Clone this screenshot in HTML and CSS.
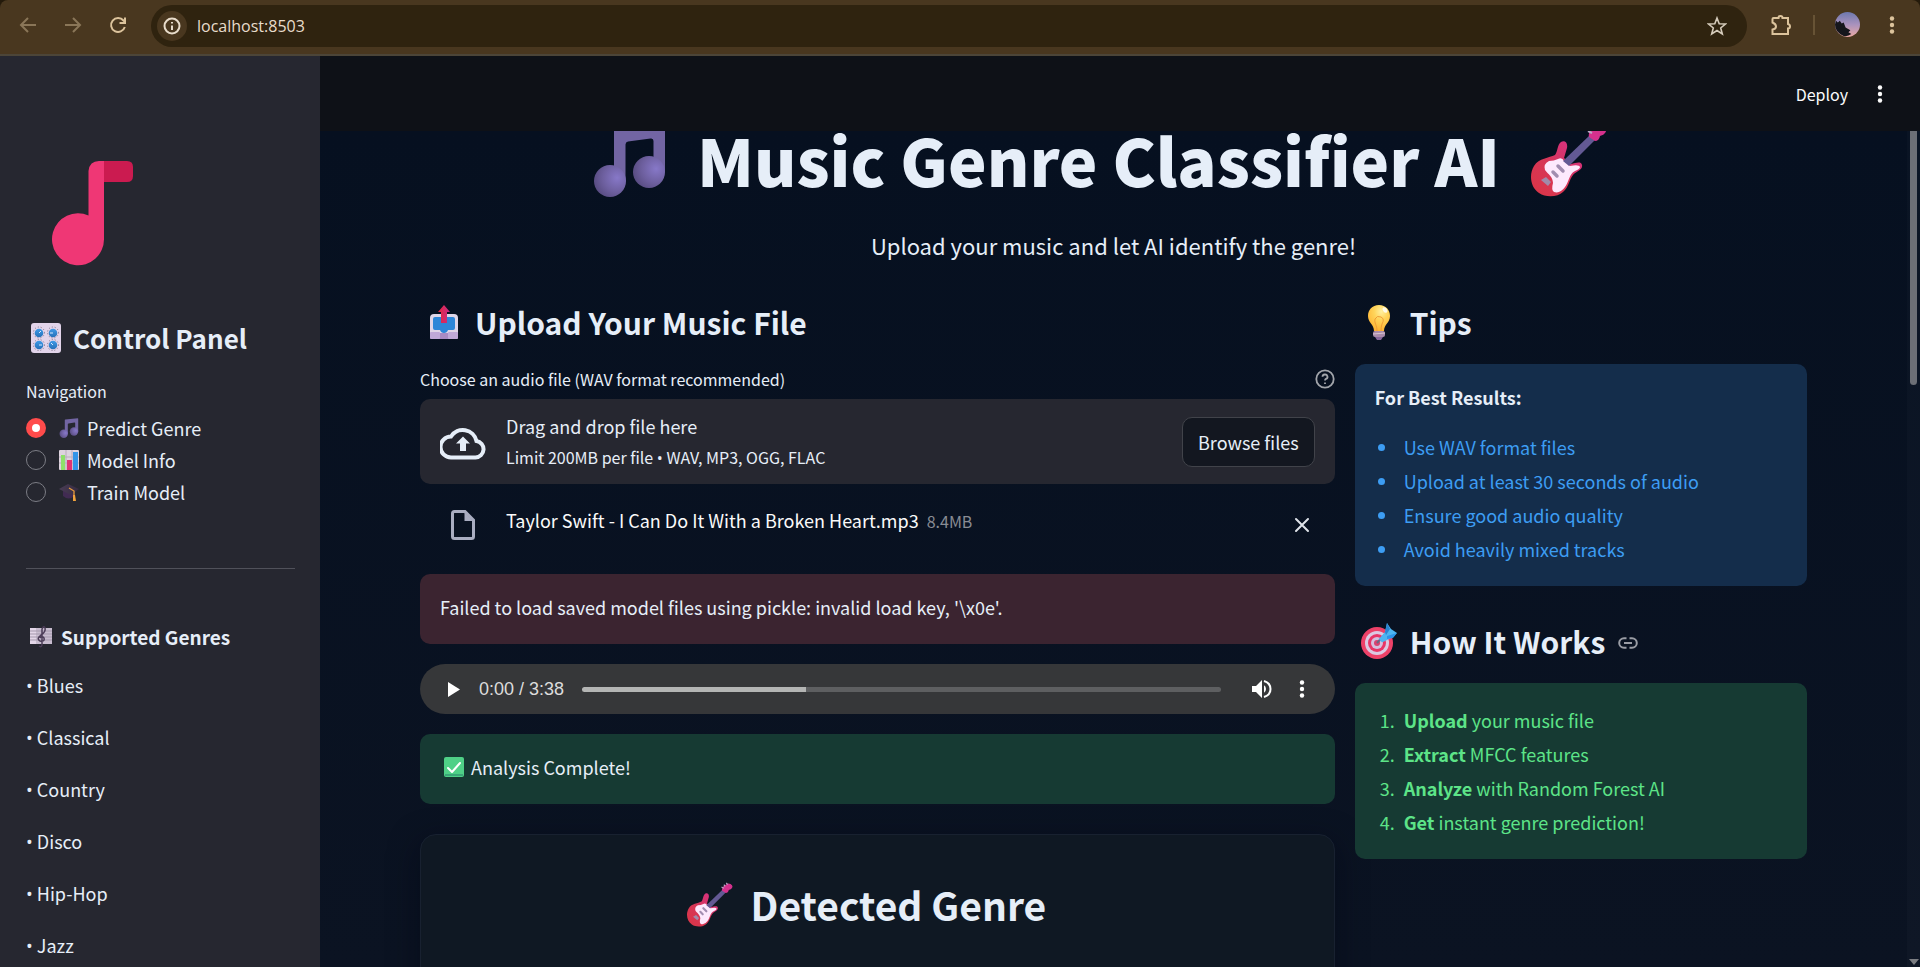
FILE: index.html
```html
<!DOCTYPE html>
<html lang="en">
<head>
<meta charset="utf-8">
<title>Music Genre Classifier AI</title>
<link rel="stylesheet" href="styles.css">
</head>
<body>
<svg class="sprite" aria-hidden="true">
  <defs>
    <radialGradient id="noteHead" cx=".72" cy=".4" r=".75"><stop offset="0" stop-color="#8778c8"/><stop offset=".6" stop-color="#6d5f9e"/><stop offset="1" stop-color="#574b80"/></radialGradient>
    <linearGradient id="guitarBody" x1="0" y1="1" x2="1" y2="0"><stop offset="0" stop-color="#dc3545"/><stop offset=".5" stop-color="#d63659"/><stop offset="1" stop-color="#d9308f"/></linearGradient>
    <linearGradient id="arrowRed" x1="0" x2="1"><stop offset="0" stop-color="#e8283c"/><stop offset="1" stop-color="#c42a88"/></linearGradient>
    <radialGradient id="bulbGlow" cx=".6" cy=".25" r=".8"><stop offset="0" stop-color="#fff0a0"/><stop offset=".4" stop-color="#ffd45a"/><stop offset="1" stop-color="#ffb02e"/></radialGradient>
    <linearGradient id="knob" x1="0" y1="0" x2="0" y2="1"><stop offset="0" stop-color="#3f9be8"/><stop offset="1" stop-color="#2670b8"/></linearGradient>
    <linearGradient id="capTop" x1="0" x2="1"><stop offset="0" stop-color="#4a3d55"/><stop offset="1" stop-color="#352a40"/></linearGradient>
    <linearGradient id="sky" x1="0" y1="0" x2="0" y2="1"><stop offset="0" stop-color="#6d78ae"/><stop offset=".5" stop-color="#a992bd"/><stop offset="1" stop-color="#eba9a4"/></linearGradient>
  </defs>
  <symbol id="e-note" viewBox="0 0 72 76">
    <path d="M20 8Q20 6 22 6L69 1Q71 1 71 3V51H59.500V20Q59.500 17 56.500 17.500L34 20.500Q31.500 21 31.500 23.500V60H20Z" fill="#7265a3"/>
    <ellipse cx="16" cy="60" rx="16" ry="16" fill="url(#noteHead)"/><ellipse cx="55" cy="51" rx="16" ry="16" fill="url(#noteHead)"/>
  </symbol>
  <symbol id="e-guitar" viewBox="0 0 76 76">
    <path d="M24 34C27 30 26 24 30 21C34 19 37 22 36 27L33 37L40 43C45 42 50 40 51 44C52 49 45 50 42 54C38 59 38 66 32 71C27 76 15 77 8 72C-1 66-2 53 3 45C8 37 18 37 24 34Z" fill="url(#guitarBody)"/>
    <path d="M27 38Q31 36 33 40L39 45Q48 43 49 46Q49 48 44 50C38 53 38 61 34 66Q29 73 23 71Q20 69 22 62C22 56 17 53 14 49Q12 43 18 40Q23 40 27 38Z" fill="#fde9fd"/>
    <path d="M32 40L59 14L64 19L38 45Z" fill="#635994"/>
    <path d="M58 16Q57 12 60 9L66 5Q68 3 72 5Q77 8 74 12Q73 14 69 15Q68 20 64 20Z" fill="#d5318d"/>
    <path d="M57 10L61 12M61 6L63 9M65 3L67 6" stroke="#b9a8c6" stroke-width="2"/>
    <path d="M27 45L32 50M22 51L26 55" stroke="#a28db0" stroke-width="3.500" stroke-linecap="round"/>
    <path d="M15 56L20 61L17 65L10 59Z" fill="#a18aaa"/>
  </symbol>
  <symbol id="e-upload" viewBox="0 0 36 36">
    <rect x="4" y="26" width="28" height="9" rx="2" fill="#a98bc4"/><path d="M8 10H28Q32 10 32 14V29H4V14Q4 10 8 10Z" fill="#e0d6e8"/>
    <rect x="4" y="28" width="10" height="7" rx="1" fill="#c0a9d8"/><rect x="22" y="28" width="10" height="7" rx="1" fill="#c0a9d8"/>
    <path d="M9 13H27Q29 13 29 15V24Q29 26 27 26H22Q21 29 18 29T14 26H9Q7 26 7 24V15Q7 13 9 13Z" fill="#2d86d8"/>
    <path d="M18 1L24 8H21V19H15V8H12Z" fill="url(#arrowRed)"/>
  </symbol>
  <symbol id="e-bulb" viewBox="0 0 36 36">
    <path d="M18 1C11 1 7 6 7 12C7 19 13 20 13 27H23C23 20 29 19 29 12C29 6 25 1 18 1Z" fill="url(#bulbGlow)"/>
    <path d="M16 27C16 21 13 19 14 15Q16 11 20 13Q24 15 21 20Q20 23 20 27" fill="none" stroke="#ef9d35" stroke-width="1"/>
    <ellipse cx="24" cy="6" rx="2" ry="3" fill="#fffbe8" transform="rotate(-35 24 6)"/>
    <rect x="12" y="27" width="12" height="6" rx="2" fill="#a98cab"/><path d="M14 33H22L20 36H16Z" fill="#86679b"/><path d="M12 30L24 29" stroke="#d8c4d2"/>
  </symbol>
  <symbol id="e-target" viewBox="0 0 36 36">
    <circle cx="16" cy="20" r="16" fill="#ed4168"/><circle cx="16" cy="20" r="12" fill="#dcc9e2"/><circle cx="16" cy="20" r="9" fill="#e83667"/><circle cx="16" cy="20" r="6" fill="#d4c0df"/><circle cx="16" cy="20" r="3" fill="#d94272"/>
    <path d="M16 20L26 9" stroke="#6a6784" stroke-width="2"/><path d="M18 16L24 9L26 0L30 6L36 10L32 14L24 18Q20 21 18 16Z" fill="#4db5f1"/><path d="M24 9L26 0L29 6L25 12Z" fill="#2b84d0"/><path d="M26 13L36 10L32 15L26 16Z" fill="#2c94e8"/>
  </symbol>
  <symbol id="e-knobs" viewBox="0 0 30 30">
    <rect width="30" height="30" rx="3" fill="#e2d4ea"/>
    <g fill="none" stroke="#7d7187" stroke-width="1" stroke-dasharray="1 2"><circle cx="8" cy="9.500" r="5.500"/><circle cx="22" cy="9.500" r="5.500"/><circle cx="8" cy="22" r="5.500"/><circle cx="22" cy="22" r="5.500"/></g>
    <g fill="url(#knob)"><circle cx="8" cy="10" r="4.300"/><circle cx="22" cy="10" r="4.300"/><circle cx="8" cy="22" r="4.300"/><circle cx="22" cy="22" r="4.300"/></g>
    <path d="M8 10L10 8M22 10H19M8 22H11M22 22L20 20" stroke="#d8eaff" stroke-width="1"/>
  </symbol>
  <symbol id="e-chart" viewBox="0 0 20 20">
    <rect width="20" height="20" rx="1" fill="#ded3df"/><path d="M0 7H20M0 13H20M7 0V20M13 0V20" stroke="#b9acbc" stroke-width="1"/>
    <rect x="2" y="5" width="4" height="15" fill="#8fe06a"/><rect x="8" y="10" width="5" height="10" fill="#e03473"/><rect x="14" y="2" width="5" height="18" fill="#3394e8"/>
  </symbol>
  <symbol id="e-cap" viewBox="0 0 20 20">
    <path d="M4 8L15 10V14Q10 19 4 14Z" fill="#412b52"/><path d="M0 7L9 2L20 7L12 13Z" fill="url(#capTop)"/><path d="M10 6L15 9V16" fill="none" stroke="#e69a3d" stroke-width="1.300"/><path d="M14 13H16L17 19H14Z" fill="#f0a23c"/>
  </symbol>
  <symbol id="e-score" viewBox="0 0 22 22">
    <rect y="2" width="22" height="16" fill="#c8bccf"/><rect y="2" width="6" height="16" fill="#e3d6e8"/><path d="M0 5H22M0 8H22M0 11H22M0 14H22" stroke="#a599ad" stroke-width="1"/>
    <path d="M9 20Q12 22 12 18L12 3Q14 -1 15 2Q16 6 11 9Q6 13 10 15Q15 16 14 12Q12 9 10 12" fill="none" stroke="#4b3c57" stroke-width="1.500"/>
  </symbol>
  <symbol id="e-check" viewBox="0 0 20 20">
    <rect width="20" height="20" rx="2" fill="#4fd087"/><path d="M1 18H19" stroke="#3aa778" stroke-width="2"/><path d="M4 11L8 15L16 6" fill="none" stroke="#fff" stroke-width="2" stroke-linecap="round" stroke-linejoin="round"/>
  </symbol>
  <symbol id="i-dots" viewBox="0 0 24 24"><circle cx="12" cy="5.500" r="2.200"/><circle cx="12" cy="12" r="2.200"/><circle cx="12" cy="18.500" r="2.200"/></symbol>
</svg>

<nav class="browser" aria-label="Browser toolbar">
  <button class="tool dim" aria-label="Back"><svg viewBox="0 0 20 20"><path d="M18 10H3.500M10 3L3 10L10 17" /></svg></button>
  <button class="tool dim" aria-label="Forward"><svg viewBox="0 0 20 20"><path d="M2 10H16.500M10 3L17 10L10 17"/></svg></button>
  <button class="tool" aria-label="Reload"><svg viewBox="0 0 20 20"><path d="M16.800 12A7 7 0 1 1 15.500 5.500L17 7"/><path d="M17 2.500V8H11.500"/></svg></button>
  <div class="address">
    <button class="info" aria-label="Site information"><svg viewBox="0 0 18 18"><circle cx="9" cy="9" r="7.500"/><path d="M9 8.500V13M9 5V6.500"/></svg></button>
    <input class="url" aria-label="Address" value="localhost:8503">
    <button class="tool star" aria-label="Bookmark"><svg viewBox="0 0 20 20"><path d="M10 2L12.200 7.700L18.500 8L13.700 12L15.300 18L10 14.500L4.700 18L6.300 12L1.500 8L7.800 7.700Z"/></svg></button>
  </div>
  <button class="tool puzzle" aria-label="Extensions"><svg viewBox="0 0 22 22"><path d="M3.500 4H8.500Q8.500 2 10.500 2T12.500 4H18V10Q20 10.500 20 12.500T18 14.500V20H2.500V15.500Q6 15 6 12.500T2.500 8.500V5Q2.500 4 3.500 4Z"/></svg></button>
  <span class="divider"></span>
  <button class="avatar" aria-label="Profile"><svg viewBox="0 0 26 26"><circle cx="13" cy="13" r="13" fill="url(#sky)"/><path d="M1 9L3 11L5 9L7 12L9 11L11 16L16 19L14 21L17 23Q13 26 9 25Q0 21 0 13Z" fill="#15161c"/></svg></button>
  <button class="tool menu" aria-label="Browser menu"><svg viewBox="0 0 24 24"><use href="#i-dots"/></svg></button>
</nav>

<div class="app">
  <aside class="sidebar">
    <svg class="brand" viewBox="0 0 107 105" role="img" aria-label="Music note">
      <path d="M78 0H101Q107 0 107 6V15Q107 21 101 21H78Z" fill="#cb1b50"/>
      <path d="M62.500 54.500V10Q63.500 0 73 0H78V78A26 26 0 1 1 62.500 54.500Z" fill="#ef3775"/>
    </svg>
    <h2 class="side-title"><svg><use href="#e-knobs"/></svg>Control Panel</h2>
    <fieldset class="nav">
      <legend>Navigation</legend>
      <label><input type="radio" name="page" checked><svg><use href="#e-note"/></svg>Predict Genre</label>
      <label><input type="radio" name="page"><svg><use href="#e-chart"/></svg>Model Info</label>
      <label><input type="radio" name="page"><svg><use href="#e-cap"/></svg>Train Model</label>
    </fieldset>
    <hr>
    <h3 class="side-sub"><svg><use href="#e-score"/></svg>Supported Genres</h3>
    <div class="genres">
      <p><span class="dot">•</span> Blues</p>
      <p><span class="dot">•</span> Classical</p>
      <p><span class="dot">•</span> Country</p>
      <p><span class="dot">•</span> Disco</p>
      <p><span class="dot">•</span> Hip-Hop</p>
      <p><span class="dot">•</span> Jazz</p>
    </div>
  </aside>

  <div class="page">
    <header class="toolbar">
      <button class="deploy">Deploy</button>
      <button class="more" aria-label="Main menu"><svg><use href="#i-dots"/></svg></button>
    </header>
    <div class="scroller">
      <main class="content">
        <h1><svg><use href="#e-note"/></svg>Music Genre Classifier AI<svg><use href="#e-guitar"/></svg></h1>
        <p class="lead">Upload your music and let AI identify the genre!</p>
        <div class="columns">
          <section class="primary">
            <h2 class="heading"><svg><use href="#e-upload"/></svg>Upload Your Music File</h2>
            <div class="field-label">
              <span>Choose an audio file (WAV format recommended)</span>
              <button class="help" aria-label="Help"><svg viewBox="0 0 20 20"><circle cx="10" cy="10" r="8.700"/><path d="M7.500 7.800A2.500 2.300 0 1 1 11 9.900Q10 10.400 10 11.600M10 13.500V15"/></svg></button>
            </div>
            <div class="dropzone">
              <svg class="cloud" viewBox="0 0 46 36"><path d="M11 33.500H35.500A8.300 8.300 0 0 0 36.500 17A14 14 0 0 0 11 12.500A10.500 10.500 0 0 0 11 33.500Z" fill="none" stroke="currentColor" stroke-width="4"/><path d="M23 12.500L30 19.500H26V27H20V19.500H16Z" fill="currentColor"/></svg>
              <div class="drop-text"><span>Drag and drop file here</span><small>Limit 200MB per file <span class="dot">•</span> WAV, MP3, OGG, FLAC</small></div>
              <button class="browse">Browse files</button>
            </div>
            <div class="file">
              <svg class="doc" viewBox="0 0 24 30"><path d="M3.500 1.500H14L22.500 10V26.500Q22.500 28.500 20.500 28.500H3.500Q1.500 28.500 1.500 26.500V3.500Q1.500 1.500 3.500 1.500Z" fill="none" stroke="currentColor" stroke-width="3"/><path d="M13.500 2V11H22Z" fill="currentColor"/></svg>
              <div class="file-name"><span>Taylor Swift - I Can Do It With a Broken Heart.mp3</span><small>8.4MB</small></div>
              <button class="remove" aria-label="Remove file"><svg viewBox="0 0 16 16"><path d="M2 2L14 14M14 2L2 14"/></svg></button>
            </div>
            <div class="alert error" role="alert">Failed to load saved model files using pickle: invalid load key, '\x0e'.</div>
            <div class="player">
              <button class="play" aria-label="Play"><svg viewBox="0 0 12 15"><path d="M0 0L12 7.500L0 15Z"/></svg></button>
              <span class="time">0:00 / 3:38</span>
              <input class="track" type="range" aria-label="Seek" min="0" max="218" value="0">
              <button class="volume" aria-label="Mute"><svg viewBox="0 0 20 20"><path d="M0 7V13H4L10 19V1L4 7Z"/><path d="M12 6.200Q14 7.500 14 10T12 13.800Z"/><path d="M12 2Q18.500 4 18.500 10T12 18" fill="none" stroke="currentColor" stroke-width="2"/></svg></button>
              <button class="options" aria-label="More media controls"><svg><use href="#i-dots"/></svg></button>
            </div>
            <div class="alert success" role="status"><svg><use href="#e-check"/></svg>Analysis Complete!</div>
            <div class="result"><h2><svg><use href="#e-guitar"/></svg>Detected Genre</h2></div>
          </section>
          <section class="secondary">
            <h2 class="heading"><svg><use href="#e-bulb"/></svg>Tips</h2>
            <div class="alert tips"><strong>For Best Results:</strong>
              <ul><li>Use WAV format files</li><li>Upload at least 30 seconds of audio</li><li>Ensure good audio quality</li><li>Avoid heavily mixed tracks</li></ul>
            </div>
            <h2 class="heading"><svg><use href="#e-target"/></svg>How It Works<a href="#how-it-works" class="anchor" aria-label="Link to heading"><svg viewBox="0 0 20 12"><path d="M8.500 1.200H6A4.800 4.800 0 0 0 6 10.800H8.500M11.500 1.200H14A4.800 4.800 0 0 1 14 10.800H11.500M6 6H14"/></svg></a></h2>
            <div class="alert steps">
              <ol><li><b>Upload</b> your music file</li><li><b>Extract</b> MFCC features</li><li><b>Analyze</b> with Random Forest AI</li><li><b>Get</b> instant genre prediction!</li></ol>
            </div>
          </section>
        </div>
      </main>
      <div class="scrollbar" aria-hidden="true"><span class="thumb"></span><span class="arrow"></span></div>
    </div>
  </div>
</div>
</body>
</html>
```

FILE: styles.css
```css
* { box-sizing: border-box; }

body {
  margin: 0;
  height: 100vh;
  overflow: hidden;
  display: flex;
  flex-direction: column;
  background: #241a0b;
  color: #e6eef8;
  font: 18px/30px "Noto Sans CJK SC", "Noto Sans", sans-serif;
}

h1, h2, h3, p, ul, ol { margin: 0; padding: 0; }
button {
  padding: 0;
  border: 0;
  background: none;
  color: inherit;
  font: inherit;
}
svg { display: block; flex: none; fill: currentColor; }
.sprite { position: absolute; width: 0; height: 0; }
.dot { font-family: "Open Sans", "Noto Sans", sans-serif; line-height: 1; }

/* Browser toolbar */
.browser {
  flex: none;
  display: flex;
  align-items: center;
  height: 56px;
  padding: 0 16px 5px;
  border-bottom: 2px solid #4c4538;
  border-radius: 8px 8px 0 0;
  background: #49371f;
  color: #dcc39c;
}
.tool {
  display: grid;
  place-items: center;
  width: 24px;
  height: 24px;
  margin-right: 21px;
}
.tool svg { width: 20px; height: 20px; fill: none; stroke: currentColor; stroke-width: 2; }
.dim { color: #8a7658; }
.address {
  flex: 1;
  display: flex;
  align-items: center;
  height: 42px;
  margin-top: 2px;
  padding: 0 6px;
  border-radius: 21px;
  background: #2f230f;
}
.info {
  display: grid;
  place-items: center;
  width: 30px;
  height: 30px;
  border-radius: 50%;
  background: #49371f;
  color: #e8dccb;
}
.info svg { width: 18px; height: 18px; fill: none; stroke: currentColor; stroke-width: 2; }
.url {
  flex: 1;
  padding: 0;
  margin-left: 10px;
  border: 0;
  outline: 0;
  background: none;
  color: #e8dccb;
  font: 16px/24px "Open Sans", "Noto Sans", sans-serif;
}
.star { margin-right: 12px; color: #d5cbbb; }
.star svg { stroke-width: 1.6; }
.puzzle { margin: 0 20px 0 22px; }
.puzzle svg { width: 22px; height: 22px; }
.divider { width: 2px; height: 20px; background: #675335; }
.avatar { margin: 0 20px 0 20px; }
.avatar svg { width: 25px; height: 25px; }
.menu { width: 24px; margin: 0; }
.menu svg { width: 24px; height: 24px; fill: currentColor; stroke: none; }

/* App frame */
.app { flex: 1; min-height: 0; display: flex; background: #071021; }
.sidebar {
  flex: none;
  width: 320px;
  padding: 105px 25px 0 26px;
  overflow: hidden;
  background: #262730;
}
.brand { width: 107px; height: 105px; }
.side-title {
  display: flex;
  align-items: center;
  gap: 12px;
  margin: 54px 0 23px;
  padding-left: 5px;
  font-size: 26px;
  line-height: 36px;
  font-weight: 600;
}
.side-title svg { width: 30px; height: 30px; }
.nav { margin: 0; padding: 0; border: 0; min-width: 0; }
.nav legend { padding: 0; margin-bottom: 9px; font-size: 16px; line-height: 24px; }
.nav label { display: flex; align-items: center; height: 32px; gap: 8px; }
.nav label svg { width: 20px; height: 20px; }
.nav input {
  appearance: none;
  width: 20px;
  height: 20px;
  margin: 0 5px 0 0;
  border: 1px solid #7c7d85;
  border-radius: 50%;
}
.nav input:checked { border: 6px solid #ff4b4b; background: #fff; }
.sidebar hr { margin: 60px 0 54px; border: 0; border-top: 1px solid #50515a; }
.side-sub {
  display: flex;
  align-items: center;
  gap: 9px;
  padding-left: 4px;
  font-size: 19px;
  line-height: 28px;
  font-weight: 600;
}
.side-sub svg { width: 22px; height: 22px; }
.genres { display: grid; gap: 22px; margin-top: 19px; }

.page { flex: 1; min-width: 0; display: flex; flex-direction: column; }
.toolbar {
  flex: none;
  display: flex;
  justify-content: flex-end;
  align-items: center;
  gap: 20px;
  height: 75px;
  padding-right: 28px;
  background: #0e1117;
  color: #fafafa;
}
.deploy { font-size: 16px; }
.more svg { width: 24px; height: 24px; }
.scroller {
  flex: 1;
  min-height: 0;
  display: flex;
  overflow: hidden;
  background: linear-gradient(#061020, #0b1322);
}
.content { flex: 1; min-width: 0; margin-top: -12px; padding: 0 100px; }
.scrollbar {
  flex: none;
  display: flex;
  flex-direction: column;
  justify-content: space-between;
  align-items: center;
  width: 13px;
  padding-bottom: 2px;
  background: rgba(255, 255, 255, .02);
}
.thumb { width: 7px; height: 254px; border-radius: 0 0 4px 4px; background: #6c6f76; }
.arrow { border: 5px solid transparent; border-bottom: 0; border-top: 6px solid #7b7d82; }

/* Page headings */
h1 {
  display: flex;
  justify-content: center;
  align-items: center;
  gap: 31px;
  padding-right: 26px;
  font-size: 65px;
  line-height: 80px;
  font-weight: 900;
  white-space: nowrap;
}
h1 svg { width: 76px; height: 76px; }
h1 svg:first-child { width: 72px; }
.lead { margin: 28px 0 39px; font-size: 22px; line-height: 36px; text-align: center; }
.columns { display: flex; gap: 20px; }
.primary { flex: 1 1 calc(66.6667% - 16px); min-width: 0; }
.secondary { flex: 1 1 calc(33.3333% - 16px); min-width: 0; }
.heading {
  display: flex;
  align-items: center;
  gap: 13px;
  padding-left: 6px;
  font-size: 30px;
  line-height: 40px;
  font-weight: 600;
}
.heading > svg { width: 36px; height: 36px; }
.anchor { display: flex; align-items: flex-end; height: 16px; color: #9a9da5; }
.anchor svg { width: 20px; height: 12px; fill: none; stroke: currentColor; stroke-width: 2; }

/* Upload */
.field-label {
  display: flex;
  justify-content: space-between;
  align-items: center;
  margin: 25px 0 8px;
  font-size: 16px;
  line-height: 24px;
}
.help { color: #a2a5ab; }
.help svg { width: 20px; height: 20px; fill: none; stroke: currentColor; stroke-width: 1.8; }
.dropzone {
  display: flex;
  align-items: center;
  min-height: 85px;
  padding: 0 20px;
  border-radius: 10px;
  background: #262730;
}
.cloud { width: 46px; height: 36px; margin-right: 20px; }
.drop-text { flex: 1; display: grid; gap: 5px; line-height: 26px; }
small { font-size: 16px; }
.browse {
  height: 50px;
  padding: 0 15px;
  border: 1px solid #41434a;
  border-radius: 10px;
  background: #131720;
}
.file { display: flex; align-items: center; height: 57px; margin: 12px 0 21px; padding: 0 25px 0 31px; }
.doc { width: 24px; height: 30px; margin-right: 31px; color: #a9adc1; }
.file-name { flex: 1; padding-bottom: 8px; color: #fafafa; }
.file-name small { margin-left: 8px; color: #898c93; }
.remove svg { width: 16px; height: 16px; stroke: #dfe3ea; stroke-width: 2; stroke-linecap: round; }

/* Coloured message boxes */
.alert { padding: 18px 20px 22px; border-radius: 10px; }
.error { background: #3b2430; }
.success { display: flex; align-items: center; gap: 7px; padding-left: 24px; background: #163a33; }
.success svg { width: 20px; height: 20px; }
.alert li { padding-left: 5px; margin-bottom: 4px; }
.alert li:last-child { margin-bottom: 0; }
.alert ul, .alert ol { padding-left: 24px; }
.tips { margin: 22px 0 35px; background: #142d4b; }
.tips strong { display: block; margin-bottom: 20px; font-weight: 600; }
.tips ul { color: #3d9df3; }
.steps { margin-top: 22px; padding-top: 22px; background: #163a33; color: #5de488; }

/* Audio player */
.player {
  display: flex;
  align-items: center;
  height: 50px;
  margin: 20px 0;
  padding: 0 21px 0 28px;
  border-radius: 25px;
  background: #363739;
  color: #fff;
}
.play svg { width: 12px; height: 15px; }
.time { margin: 0 18px 0 19px; color: #dcdcdc; font: 18px/24px "Liberation Sans", Arial, sans-serif; }
.track {
  appearance: none;
  flex: 1;
  min-width: 0;
  height: 5px;
  margin: 0 31px 0 0;
  border-radius: 3px;
  background: linear-gradient(90deg, #b4b5b4 35%, #5e5f61 35%);
}
.track::-webkit-slider-thumb { appearance: none; width: 0; height: 0; }
.volume { margin-right: 18px; }
.volume svg { width: 20px; height: 20px; }
.options svg { width: 24px; height: 24px; }

/* Result card */
.result {
  height: 260px;
  margin-top: 30px;
  padding: 41px 20px;
  border: 1px solid #182130;
  border-radius: 16px;
  background: #0f1823;
  box-shadow: 0 8px 30px rgba(2, 6, 20, .5);
}
.result h2 {
  display: flex;
  justify-content: center;
  align-items: center;
  gap: 18px;
  padding-right: 22px;
  font-size: 39px;
  line-height: 56px;
  font-weight: 600;
}
.result svg { width: 46px; height: 46px; }
```
